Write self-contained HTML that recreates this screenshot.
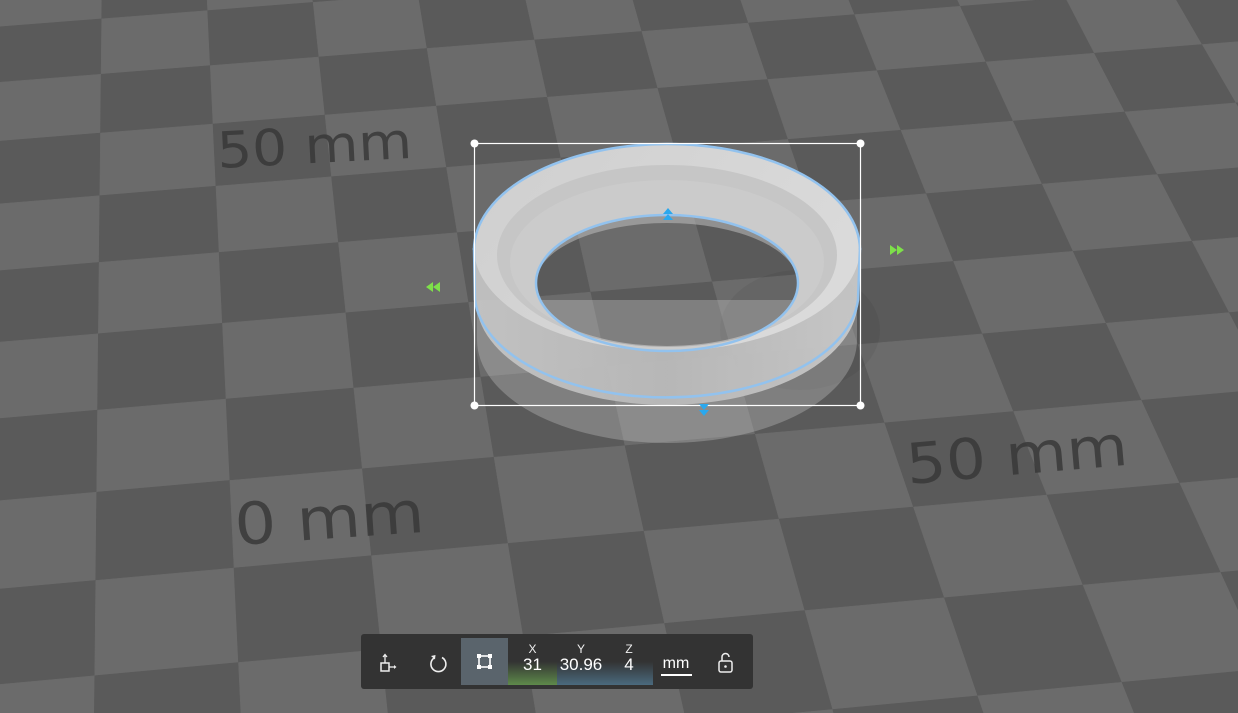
<!DOCTYPE html>
<html><head><meta charset="utf-8">
<style>
html,body{margin:0;padding:0;width:1238px;height:713px;overflow:hidden;background:#626262;font-family:"Liberation Sans","DejaVu Sans",sans-serif}
#scene{position:absolute;left:0;top:0;display:block}
.tb{position:absolute;left:361px;top:634px;width:392px;height:55px;background:#333333;border-radius:3px}
.btn{position:absolute;top:4px;height:47px}
.lbl{position:absolute;color:#eee;font-size:12px;text-align:center}
.val{position:absolute;color:#fff;font-size:17px;text-align:center}
</style></head><body>
<svg id="scene" width="1238" height="713" viewBox="0 0 1238 713">
<g id="floor"></g>
<g fill="#383838" fill-opacity="0.85" font-family="'DejaVu Sans','Liberation Sans',sans-serif">
<text x="218" y="168" font-size="50" textLength="195" lengthAdjust="spacingAndGlyphs" transform="rotate(-3 218 168)">50 mm</text>
<text x="236" y="545" font-size="58" textLength="190" lengthAdjust="spacingAndGlyphs" transform="rotate(-4 236 545)">0 mm</text>
<text x="908" y="484" font-size="56" textLength="222" lengthAdjust="spacingAndGlyphs" transform="rotate(-5 908 484)">50 mm</text>
</g>
<defs>
<linearGradient id="wall" x1="0" x2="1" y1="0" y2="0">
<stop offset="0" stop-color="#c4c4c4"/><stop offset="0.5" stop-color="#b9b9b9"/><stop offset="1" stop-color="#c9c9c9"/>
</linearGradient>
<linearGradient id="top" x1="0" x2="1" y1="0" y2="0.4">
<stop offset="0" stop-color="#cfcfcf"/><stop offset="1" stop-color="#dadada"/>
</linearGradient>
</defs>
<ellipse cx="800" cy="330" rx="80" ry="60" fill="#000" opacity="0.05"/>
<!-- ghost lower part -->
<path d="M477 300 L477 340 A190 103 0 0 0 857 340 L857 300 Z" fill="#e0e0e0" fill-opacity="0.28"/>
<!-- main body with hole -->
<path fill-rule="evenodd" fill="url(#wall)" fill-opacity="0.95" d="M474 248 A193 103 0 0 1 860 248 L858 300 A191 105 0 0 1 476 300 Z M536 283 A131 68 0 0 0 798 283 A131 68 0 0 0 536 283 Z"/>
<!-- top face -->
<path fill-rule="evenodd" fill="url(#top)" d="M474 248 A193 103 0 0 1 860 248 A193 103 0 0 1 474 248 Z M536 283 A131 68 0 0 0 798 283 A131 68 0 0 0 536 283 Z"/>
<!-- inner taper -->
<path fill-rule="evenodd" fill="#c6c6c6" d="M497 255 A170 90 0 0 1 837 255 A170 92 0 0 1 497 255 Z M536 283 A131 68 0 0 0 798 283 A131 68 0 0 0 536 283 Z"/>
<path fill-rule="evenodd" fill="#cfcfcf" d="M510 262 A157 82 0 0 1 824 262 A157 84 0 0 1 510 262 Z M536 283 A131 68 0 0 0 798 283 A131 68 0 0 0 536 283 Z" opacity="0.6"/>
<!-- inner wall visible in hole -->
<path fill="#bdbdbd" fill-opacity="0.55" d="M536 283 A131 68 0 0 1 798 283 A131 60 0 0 0 536 283 Z"/>
<!-- blue outlines -->
<g fill="none" stroke="#92c2ee" stroke-width="2.5">
<path d="M474 250 A193 106 0 0 1 860 250"/>
<path d="M474 248 L475 300 A192 105 0 0 0 858 300 L860 248"/>
<ellipse cx="667" cy="283" rx="131" ry="68"/>
</g>
<!-- bounding box -->
<rect x="474.5" y="143.5" width="386" height="262" fill="none" stroke="#fff" stroke-width="1.2"/>
<g fill="#fff"><circle cx="474.5" cy="143.5" r="4"/><circle cx="860.5" cy="143.5" r="4"/><circle cx="474.5" cy="405.5" r="4"/><circle cx="860.5" cy="405.5" r="4"/></g>
<!-- arrows -->
<g fill="#7ee04a">
<path d="M426 287 l7 -5 v10 z M433 287 l7 -5 v10 z"/>
<path d="M904 250 l-7 -5 v10 z M897 250 l-7 -5 v10 z"/>
</g>
<g fill="#2aa8ee">
<path d="M668 208 l-5 6 h10 z M668 214 l-5 6 h10 z"/>
<path d="M704 416 l-5 -6 h10 z M704 410 l-5 -6 h10 z"/>
</g>
</svg>

<div class="tb">
  <svg class="btn" style="left:12px;width:30px" viewBox="0 0 30 47">
    <rect x="8" y="25" width="8" height="8" fill="none" stroke="#eee" stroke-width="1.5"/>
    <path d="M12 25 V17 M10 19 L12 16.5 L14 19" fill="none" stroke="#eee" stroke-width="1.3"/>
    <path d="M16 29 H21" stroke="#eee" stroke-width="1.3"/><path d="M21 27 L23.5 29 L21 31 Z" fill="#eee"/>
  </svg>
  <svg class="btn" style="left:62px;width:30px" viewBox="0 0 30 47">
    <path d="M11 20 A7.5 7.5 0 1 0 19 19.5" fill="none" stroke="#eee" stroke-width="1.6"/>
    <path d="M8 18 L12.5 17 L12 21.5 Z" fill="#eee"/>
  </svg>
  <div class="btn" style="left:100px;width:47px;background:#5a646c"></div>
  <svg class="btn" style="left:100px;width:47px" viewBox="0 0 47 47">
    <rect x="18" y="18" width="11" height="11" fill="none" stroke="#fff" stroke-width="1.6"/>
    <g fill="#fff"><rect x="16" y="16" width="4" height="4"/><rect x="27" y="16" width="4" height="4"/><rect x="16" y="27" width="4" height="4"/><rect x="27" y="27" width="4" height="4"/></g>
  </svg>
  <div class="btn" style="left:147px;width:49px;background:linear-gradient(to bottom,rgba(0,0,0,0) 50%,#5e8a4a 100%)"></div>
  <div class="btn" style="left:196px;width:96px;background:linear-gradient(to bottom,rgba(0,0,0,0) 50%,#4a6a7e 100%)"></div>
  <div class="lbl" style="left:147px;width:49px;top:8px">X</div>
  <div class="val" style="left:147px;width:49px;top:21px">31</div>
  <div class="lbl" style="left:196px;width:48px;top:8px">Y</div>
  <div class="val" style="left:190px;width:60px;top:21px">30.96</div>
  <div class="lbl" style="left:244px;width:48px;top:8px">Z</div>
  <div class="val" style="left:244px;width:48px;top:21px">4</div>
  <div class="val" style="left:296px;width:38px;top:21px;font-size:16px">mm</div>
  <div style="position:absolute;left:300px;top:40px;width:31px;height:1.5px;background:#fff"></div>
  <svg class="btn" style="left:350px;width:30px" viewBox="0 0 30 47">
    <rect x="8" y="23" width="13" height="11" rx="2" fill="none" stroke="#eee" stroke-width="1.5"/>
    <path d="M11 23 V19 A3.5 3.5 0 0 1 18 19" fill="none" stroke="#eee" stroke-width="1.5"/>
    <circle cx="14.5" cy="28.5" r="1.3" fill="#eee"/>
  </svg>
</div>

<script>
(function(){
  var src=[[0,0],[1,0],[6,6],[0,6]];
  var dst=[[213,124],[325,115],[1047,495],[234,568]];
  var A=[],b=[];
  for(var i=0;i<4;i++){var u=src[i][0],v=src[i][1],x=dst[i][0],y=dst[i][1];
    A.push([u,v,1,0,0,0,-u*x,-v*x]);b.push(x);
    A.push([0,0,0,u,v,1,-u*y,-v*y]);b.push(y);}
  var n=8;
  for(var c=0;c<n;c++){var p=c;for(var r=c+1;r<n;r++)if(Math.abs(A[r][c])>Math.abs(A[p][c]))p=r;
    var t=A[c];A[c]=A[p];A[p]=t;t=b[c];b[c]=b[p];b[p]=t;
    for(var r=0;r<n;r++){if(r===c)continue;var f=A[r][c]/A[c][c];
      for(var k=c;k<n;k++)A[r][k]-=f*A[c][k];b[r]-=f*b[c];}}
  var h=[];for(var i=0;i<n;i++)h.push(b[i]/A[i][i]);
  function P(u,v){var w=h[6]*u+h[7]*v+1;if(w<=0.05)return null;return[(h[0]*u+h[1]*v+h[2])/w,(h[3]*u+h[4]*v+h[5])/w];}
  var s='';
  for(var u=-8;u<16;u++)for(var v=-8;v<14;v++){
    var a=P(u,v),bb=P(u+1,v),cc=P(u+1,v+1),d=P(u,v+1);if(!a||!bb||!cc||!d)continue;
    var col=((u+v)%2+2)%2===0?'#5a5a5a':'#6b6b6b';
    s+='<polygon fill="'+col+'" stroke="'+col+'" stroke-width="0.5" points="'+a.join(',')+' '+bb.join(',')+' '+cc.join(',')+' '+d.join(',')+'"/>';
  }
  document.getElementById('floor').innerHTML=s;
})();
</script>
</body></html>
